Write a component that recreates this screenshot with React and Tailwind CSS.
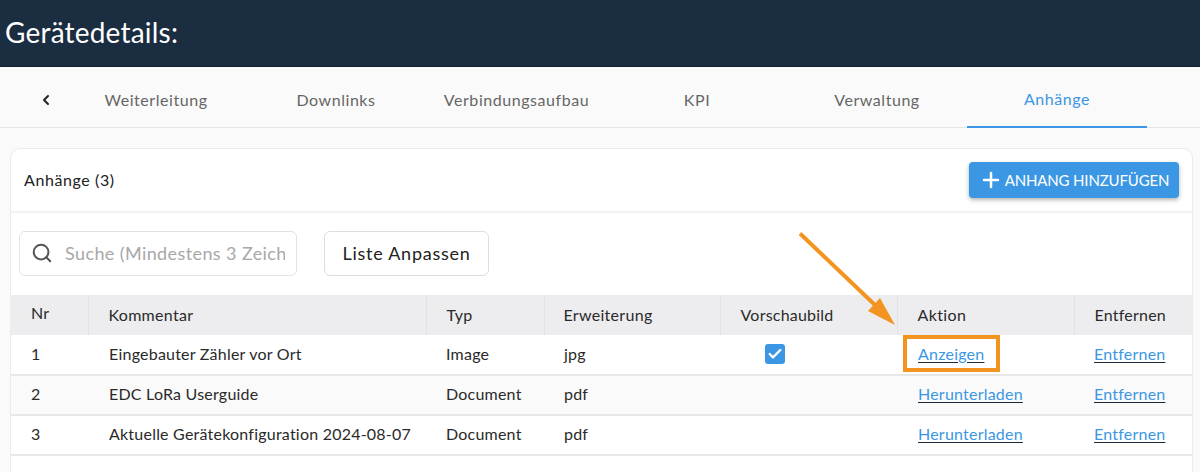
/**
 * Device details page, attachments tab.
 */
import { ChevronLeft, Plus, Search, Check } from 'lucide-react';

const FONT = "font-['Lato','Noto_Sans',sans-serif]";

const TABS = [
  { label: 'Weiterleitung', width: 'w-[180px]' },
  { label: 'Downlinks', width: 'w-[180px]' },
  { label: 'Verbindungsaufbau', width: 'w-[181px]' },
  { label: 'KPI', width: 'w-[180px]' },
  { label: 'Verwaltung', width: 'w-[180px]' },
  { label: 'Anhänge', width: 'w-[180px]', active: true },
];

const COLUMNS = [
  { label: 'Nr', width: 'w-[77px]', pad: 'pl-[20px] pb-[4px]' },
  { label: 'Kommentar', width: 'w-[338px]', pad: 'pl-[20px] tracking-[0.3px]' },
  { label: 'Typ', width: 'w-[118px]', pad: 'pl-[20px]' },
  { label: 'Erweiterung', width: 'w-[176px]', pad: 'pl-[19px] tracking-[0.3px]' },
  { label: 'Vorschaubild', width: 'w-[177px]', pad: 'pl-[20px]' },
  { label: 'Aktion', width: 'w-[177px]', pad: 'pl-[20px] tracking-[0.4px]' },
  { label: 'Entfernen', width: 'w-[118px]', pad: 'pl-[20px]' },
];

const ROWS = [
  { nr: 1, comment: 'Eingebauter Zähler vor Ort', type: 'Image', ext: 'jpg', preview: true, action: 'Anzeigen' },
  { nr: 2, comment: 'EDC LoRa Userguide', type: 'Document', ext: 'pdf', action: 'Herunterladen', shaded: true },
  { nr: 3, comment: 'Aktuelle Gerätekonfiguration 2024-08-07', type: 'Document', ext: 'pdf', action: 'Herunterladen' },
];

function TextLink({ children }) {
  return (
    <a href="#" className="text-[#3b97e3] underline decoration-[#1a2a3a] underline-offset-2">
      {children}
    </a>
  );
}

export default function App() {
  return (
    <div className={`${FONT} relative h-[472px] w-[1200px] overflow-hidden bg-[#fafafa] text-[16px] tracking-[0.22px] text-[#2a2a2a]`}>
      <header className="flex h-[67px] items-center border-b border-[#14222f] bg-[#1b2d40] pb-[2px] pl-[5px] text-[28px] tracking-[0.2px] text-white">
        Gerätedetails:
      </header>

      <nav className="flex h-[61px] items-stretch border-b border-[#e6e6e6] pl-[24px]">
        <div className="flex w-[44px] items-center justify-center pt-[5px] text-[#222]">
          <ChevronLeft size={16} strokeWidth={3} />
        </div>
        {TABS.map((tab, i) => (
          <div
            key={tab.label}
            className={`-mb-px flex items-center justify-center pt-[4px] tracking-[0.55px] ${tab.width} ${i === 0 ? '-ml-[2px]' : ''} ${
              tab.active ? 'border-b-2 border-[#3b97e3] text-[#3b97e3]' : 'text-[#666]'
            }`}
          >
            {tab.label}
          </div>
        ))}
      </nav>

      <main className="ml-[10px] mt-[20px] h-[324px] w-[1183px] rounded-t-[10px] border border-b-0 border-[#ebebeb] bg-white">
        <div className="flex h-[64px] items-center justify-between border-b-2 border-[#f2f2f2] pl-[13px] pr-[13px]">
          <span className="tracking-[0.6px] text-[#222]">Anhänge (3)</span>
          <button className="flex h-[36px] w-[210px] items-center justify-center gap-[2px] rounded-[4px] bg-[#3b97e3] text-[15px] tracking-[-0.15px] text-white shadow-[0_2px_4px_rgba(0,0,0,0.3)]">
            <Plus size={24} strokeWidth={2.5} />
            ANHANG HINZUFÜGEN
          </button>
        </div>

        <div className="flex h-[82px] items-center gap-[27px] pb-[2px] pl-[8px]">
          <div className="flex h-[45px] w-[278px] items-center gap-[12px] rounded-[6px] border border-[#e2e2e2] pl-[11px] pr-[11px]">
            <Search size={22} strokeWidth={2.2} className="shrink-0 text-[#555]" />
            <div className="flex-1 overflow-hidden whitespace-nowrap text-[18px] tracking-[0.4px] text-[#a8a8a8]">Suche (Mindestens 3 Zeichen)</div>
          </div>
          <button className="h-[45px] w-[165px] rounded-[6px] border border-[#dedede] text-[18px] tracking-[0.75px] text-[#222]">
            Liste Anpassen
          </button>
        </div>

        <table className="w-[1181px] table-fixed border-collapse text-left">
          <thead>
            <tr className="h-[40px] bg-[#ededef]">
              {COLUMNS.map((col) => (
                <th key={col.label} className={`border-l border-[#e2e2e4] font-normal first:border-l-0 ${col.width} ${col.pad}`}>
                  {col.label}
                </th>
              ))}
            </tr>
          </thead>
          <tbody>
            {ROWS.map((row) => (
              <tr key={row.nr} className={`h-[40px] border-b-2 border-[#e8e8e8] ${row.shaded ? 'bg-[#fafafa]' : ''}`}>
                <td className="pb-[2px] pl-[20px]">{row.nr}</td>
                <td className="pb-[2px] pl-[21px]">{row.comment}</td>
                <td className="pb-[2px] pl-[20px]">{row.type}</td>
                <td className="pb-[2px] pl-[20px]">{row.ext}</td>
                <td className="pb-[2px]">
                  {row.preview && (
                    <div className="ml-[45px] flex h-[20px] w-[20px] items-center justify-center rounded-[3px] bg-[#3b97e3] text-white">
                      <Check size={16} strokeWidth={3.5} />
                    </div>
                  )}
                </td>
                <td className="pb-[2px] pl-[21px]">
                  <span className="relative">
                    <TextLink>{row.action}</TextLink>
                    {row.preview && (
                      <span className="absolute -bottom-[9px] -left-[15px] -top-[9px] w-[97px] border-[4px] border-[#f39420]" />
                    )}
                  </span>
                </td>
                <td className="pb-[2px] pl-[20px]">
                  <TextLink>Entfernen</TextLink>
                </td>
              </tr>
            ))}
          </tbody>
        </table>
      </main>

      {/* Annotation arrow */}
      <svg className="absolute left-[790px] top-[225px]" width="110" height="105" viewBox="0 0 110 105">
        <path d="M10 8.5 L85 80" stroke="#f39420" strokeWidth="4" fill="none" />
        <path d="M105 100 L78 86 L90 73 Z" fill="#f39420" />
      </svg>
    </div>
  );
}
